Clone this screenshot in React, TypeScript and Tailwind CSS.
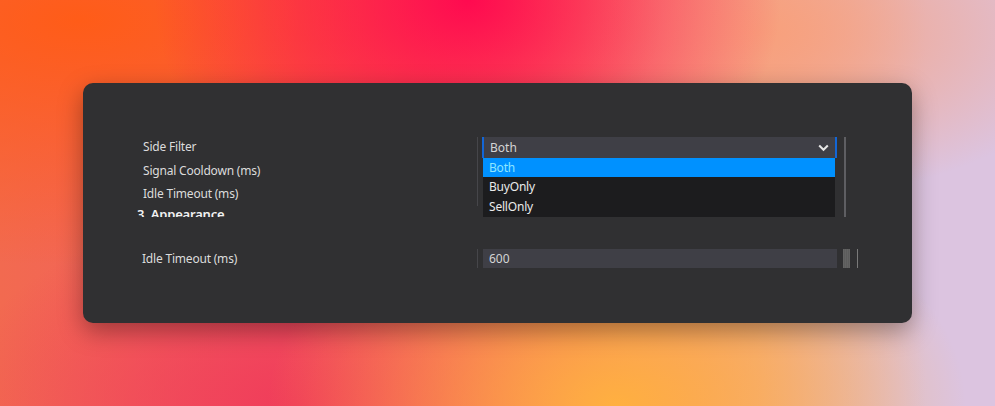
import React from "react";

const font = "font-['Noto_Sans',_'Segoe_UI',_sans-serif]";

function Chevron() {
  return (
    <svg width="11" height="8" viewBox="0 0 11 8" className="block">
      <path d="M1.2 1.5 L5.5 5.8 L9.8 1.5" fill="none" stroke="#e6e6e6" strokeWidth="2" />
    </svg>
  );
}

export default function App() {
  return (
    <div
      className={`w-[995px] h-[406px] overflow-hidden pt-[83px] pl-[83px] bg-[radial-gradient(ellipse_at_47%_0%,#ff0a50_0%,transparent_42%),radial-gradient(ellipse_at_8%_5%,#ff5c18_0%,transparent_45%),radial-gradient(ellipse_at_76%_8%,#f8a07c_0%,transparent_32%),radial-gradient(ellipse_at_62%_100%,#ffb040_0%,transparent_40%),radial-gradient(ellipse_at_30%_100%,#f03c5a_0%,transparent_35%),linear-gradient(90deg,#f26a50,#f35a62_30%,#f6806a_58%,#f0a890_76%,#dcc4e0_93%)] ${font}`}
    >
      <div className="w-[829px] h-[240px] rounded-[10px] bg-[#303032] shadow-[0_8px_24px_rgba(0,0,0,0.35)] pt-[54px]">
        {/* property grid, first group (clipped by the scroll viewport) */}
        <div className="flex h-[80px] overflow-hidden">
          <div className="w-[394px] shrink-0 pl-[54px] flex flex-col text-[12px] tracking-[-0.2px] text-[#dcdcdc]">
            <div className="shrink-0 h-[20px] flex items-center pl-[6px]">Side Filter</div>
            <div className="shrink-0 h-[20px] mt-[4px] flex items-center pl-[6px]">Signal Cooldown (ms)</div>
            <div className="shrink-0 h-[20px] mt-[3px] flex items-center pl-[6px]">Idle Timeout (ms)</div>
            <div className="shrink-0 h-[22px] flex items-center text-[13px] font-semibold text-[#f2f2f2]">
              3. Appearance
            </div>
          </div>
          <div className="flex">
            <div className="w-px h-[69px] bg-[#46464a]" />
            <div className="ml-[4px] w-[355px] flex flex-col">
              <div className="shrink-0 h-[21px] flex items-center bg-[#3f3f46] border-l-[2px] border-r-[2px] border-[#1366d6] pl-[6px] pr-[6px] text-[12px] text-[#d4d4d4]">
                <span className="flex-1">Both</span>
                <Chevron />
              </div>
              <div className="shrink-0 ml-px w-[352px] bg-[#1c1c1e] text-[12px] tracking-[-0.2px]">
                <div className="h-[19px] bg-[#0091ff] text-[#8ee6ff] flex items-center pl-[6px]">Both</div>
                <div className="h-[20px] text-[#eaeaea] flex items-center pl-[6px]">BuyOnly</div>
                <div className="h-[20px] text-[#eaeaea] flex items-center pl-[6px]">SellOnly</div>
              </div>
            </div>
            <div className="ml-[7px] w-[2px] h-[80px] bg-[#5e5e62]" />
          </div>
        </div>

        {/* property grid, second group */}
        <div className="flex mt-[32px] h-[19px] items-center">
          <div className="w-[394px] pl-[59px] text-[12px] tracking-[-0.2px] text-[#dcdcdc]">Idle Timeout (ms)</div>
          <div className="w-px h-[19px] bg-[#46464a]" />
          <div className="ml-[5px] w-[354px] h-[19px] bg-[#3f3f46] flex items-center pl-[6px] text-[12px] text-[#d4d4d4]">
            600
          </div>
          <div className="ml-[6px] w-[7px] h-[19px] bg-[repeating-linear-gradient(90deg,#5c5c5c_0px,#6a6a6a_1px,#4e4e4e_2px)]" />
          <div className="ml-[7px] w-px h-[19px] bg-[#7a7a7a]" />
        </div>
      </div>
    </div>
  );
}
